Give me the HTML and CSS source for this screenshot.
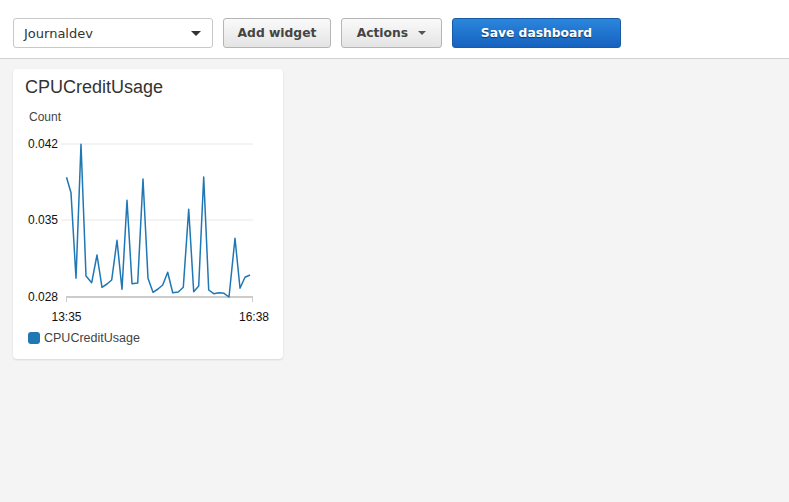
FILE: index.html
```html
<!DOCTYPE html>
<html>
<head>
    <link rel="stylesheet" href="styles.css">
</head>
<body>
    <div class="toolbar">
        <div class="select">
            <span>Journaldev</span>
            <span class="caret"></span>
        </div>
        <button class="btn btn-add">Add widget</button>
        <button class="btn btn-actions">Actions <span class="caret small"></span></button>
        <button class="btn btn-primary">Save dashboard</button>
    </div>

    <div class="dashboard">
        <div class="widget">
            <div class="widget-title">CPUCreditUsage</div>
            <svg class="chart" width="270" height="222" viewBox="0 0 270 222">
                <text class="unit" x="16" y="16">Count</text>

                <line class="grid" x1="48" y1="39" x2="240" y2="39"/>
                <line class="grid" x1="48" y1="115" x2="240" y2="115"/>
                <text class="tick" x="45" y="43">0.042</text>
                <text class="tick" x="45" y="119">0.035</text>
                <text class="tick" x="45" y="196">0.028</text>

                <line class="axis" x1="53" y1="192" x2="240" y2="192"/>
                <line class="axis-tick" x1="53.5" y1="192" x2="53.5" y2="197"/>
                <line class="axis-tick" x1="239.5" y1="192" x2="239.5" y2="197"/>
                <text class="time" x="53.5" y="216">13:35</text>
                <text class="time" x="241" y="216">16:38</text>

                <polyline class="series" points="53.5,72.3 58,87.7 63,173.3 68,39.3 73,171 78.7,177.7 84,150 89,182.3 94,179 98.7,175 104,135.3 109,184.3 114,95.3 119,178.7 124.7,178 130,74 135,173.3 140,187.3 145,184 149.7,180 154.7,167.3 159.7,187.7 165.3,187 170.3,182.3 175.7,104.3 180.7,186.7 185.7,181 190.7,72 195.7,185 200.7,188.7 206,187.7 211,188.3 216,192 222,133.3 227,183.3 232,172.3 237,170"/>
            </svg>
            <div class="legend">
                <span class="swatch"></span>
                <span>CPUCreditUsage</span>
            </div>
        </div>
    </div>
</body>
</html>
```

FILE: styles.css
```css
:root {
    --page-bg: #f4f4f4;
    --border: #cccccc;
    --text: #333333;
    --series: #1f77b4;
}

body {
    margin: 0;
    background: var(--page-bg);
    font-family: "Liberation Sans", Arial, sans-serif;
    color: var(--text);
}

.toolbar {
    display: flex;
    align-items: flex-start;
    gap: 10px;
    height: 59px;
    padding: 18px 13px 0;
    box-sizing: border-box;
    background: #ffffff;
    border-bottom: 1px solid #d0d0d0;
}

.select {
    width: 200px;
    height: 30px;
    box-sizing: border-box;
    display: flex;
    align-items: center;
    justify-content: space-between;
    padding: 0 11px 0 10px;
    border: 1px solid #c8c8c8;
    border-radius: 3px;
    background: #fff;
    font-family: "DejaVu Sans", sans-serif;
    font-size: 13px;
    color: #333;
}

.caret {
    width: 0;
    height: 0;
    border-left: 5px solid transparent;
    border-right: 5px solid transparent;
    border-top: 5px solid #333;
}

.caret.small {
    display: inline-block;
    border-left-width: 4px;
    border-right-width: 4px;
    border-top: 4px solid #555;
    margin-left: 6px;
    vertical-align: 2px;
}

.btn {
    height: 30px;
    box-sizing: border-box;
    padding: 0;
    border: 1px solid #b5b5b5;
    border-radius: 3px;
    background: linear-gradient(#fafafa, #e4e4e4);
    font-family: "DejaVu Sans", sans-serif;
    font-weight: bold;
    font-size: 12.3px;
    color: #444;
}

.btn-add {
    width: 108px;
}

.btn-actions {
    width: 101px;
}

.btn-primary {
    width: 169px;
    color: #fff;
    border-color: #1a5ba6;
    background: linear-gradient(#2b86dd, #1662bf);
    text-shadow: 0 1px 1px rgba(0, 0, 0, 0.5);
}

.dashboard {
    padding: 10px 13px;
}

.widget {
    width: 270px;
    height: 290px;
    box-sizing: border-box;
    background: #fff;
    border-radius: 4px;
    box-shadow: 0 1px 2px rgba(0, 0, 0, 0.12);
}

.widget-title {
    padding: 8px 12px 0;
    height: 28px;
    font-size: 18px;
    color: #333;
}

.chart {
    display: block;
    font-family: "Liberation Sans", Arial, sans-serif;
}

.chart .unit {
    font-size: 12px;
    fill: #444;
}

.chart .grid {
    stroke: #e8e8e8;
    stroke-width: 1;
}

.chart .tick {
    font-size: 12px;
    fill: #111;
    text-anchor: end;
}

.chart .axis {
    stroke: #cccccc;
    stroke-width: 2;
}

.chart .axis-tick {
    stroke: #cccccc;
    stroke-width: 1;
}

.chart .time {
    font-size: 12px;
    fill: #111;
    text-anchor: middle;
}

.chart .series {
    fill: none;
    stroke: var(--series);
    stroke-width: 1.5;
    stroke-linejoin: round;
}

.legend {
    display: flex;
    align-items: center;
    gap: 4px;
    padding: 4px 0 0 15px;
    font-size: 12.5px;
    color: #444;
}

.swatch {
    width: 12px;
    height: 12px;
    border-radius: 3px;
    background: var(--series);
}
```
